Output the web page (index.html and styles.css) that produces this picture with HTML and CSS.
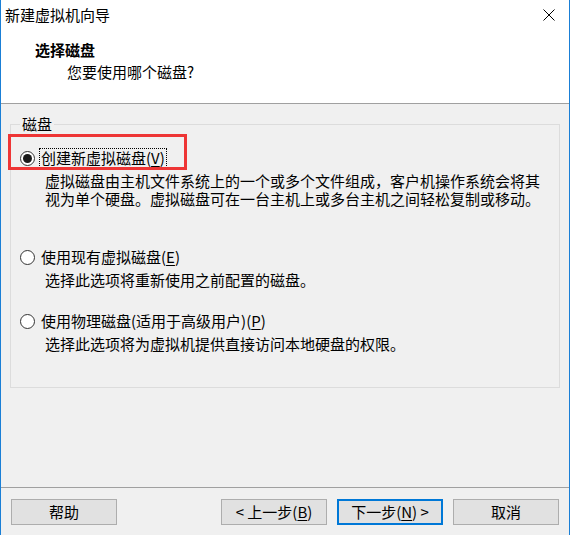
FILE: index.html
```html
<!DOCTYPE html>
<html lang="zh-CN">
<head>
<meta charset="utf-8">
<title>新建虚拟机向导</title>
<link rel="stylesheet" href="styles.css">
</head>
<body>
<div class="window">
  <div class="titlebar">
    <span class="title">新建虚拟机向导</span>
    <span class="close">
      <svg width="12" height="12" viewBox="0 0 12 12"><path d="M0.5 0.5 L11.5 11.5 M11.5 0.5 L0.5 11.5" stroke="#000" stroke-width="1" fill="none"/></svg>
    </span>
  </div>
  <div class="header">
    <div class="heading">选择磁盘</div>
    <div class="subheading">您要使用哪个磁盘?</div>
  </div>
  <div class="main">
    <fieldset class="group">
      <legend>磁盘</legend>
      <div class="option">
        <span class="radio checked"></span>
        <span class="label focus">创建新虚拟磁盘(<u>V</u>)</span>
      </div>
      <div class="desc">虚拟磁盘由主机文件系统上的一个或多个文件组成，客户机操作系统会将其<br>视为单个硬盘。虚拟磁盘可在一台主机上或多台主机之间轻松复制或移动。</div>
      <div class="option opt2">
        <span class="radio"></span>
        <span class="label">使用现有虚拟磁盘(<u>E</u>)</span>
      </div>
      <div class="desc">选择此选项将重新使用之前配置的磁盘。</div>
      <div class="option opt3">
        <span class="radio"></span>
        <span class="label">使用物理磁盘(适用于高级用户)(<u>P</u>)</span>
      </div>
      <div class="desc">选择此选项将为虚拟机提供直接访问本地硬盘的权限。</div>
    </fieldset>
  </div>
  <div class="footer">
    <button class="btn">帮助</button>
    <div class="spacer"></div>
    <button class="btn">&lt; 上一步(<u>B</u>)</button>
    <button class="btn primary">下一步(<u>N</u>) &gt;</button>
    <button class="btn">取消</button>
  </div>
  <div class="highlight"></div>
</div>
</body>
</html>
```

FILE: styles.css
```css
html, body {
  margin: 0;
  padding: 0;
  background: #ffffff;
}

body {
  font-family: "Noto Sans CJK SC", "Microsoft YaHei", sans-serif;
  font-size: 15px;
  color: #000;
}

.window {
  position: relative;
  width: 568px;
  height: 535px;
  border-left: 1px solid #1a7fd6;
  border-right: 1px solid #1a7fd6;
  background: #f0f0f0;
  display: flex;
  flex-direction: column;
}

.titlebar {
  height: 30px;
  background: #fff;
  display: flex;
  align-items: center;
  justify-content: space-between;
  padding-left: 4px;
  padding-right: 14px;
}

.title {
  line-height: 20px;
}

.close {
  display: flex;
  width: 12px;
  height: 12px;
}

.header {
  height: 73px;
  background: #fff;
  border-bottom: 1px solid #a0a0a0;
  box-sizing: content-box;
}

.heading {
  font-weight: bold;
  line-height: 20px;
  padding-top: 10px;
  padding-left: 34px;
}

.subheading {
  line-height: 20px;
  margin-top: 2px;
  padding-left: 66px;
}

.main {
  flex: 1;
  padding: 10px 9px 0 9px;
}

.group {
  margin: 0;
  width: 550px;
  box-sizing: border-box;
  height: 274px;
  border: 1px solid #dcdcdc;
  padding: 14px 10px 0 9px;
}

.group legend {
  line-height: 20px;
  padding: 0 2px;
  margin-left: 0;
}

.option {
  display: flex;
  align-items: center;
  height: 20px;
}

.opt2 {
  margin-top: 39px;
}

.opt3 {
  margin-top: 22px;
}

.radio {
  width: 15px;
  height: 15px;
  box-sizing: border-box;
  border: 1px solid #333;
  border-radius: 50%;
  background: #fff;
  display: flex;
  align-items: center;
  justify-content: center;
  flex: none;
}

.radio.checked::after {
  content: "";
  width: 9px;
  height: 9px;
  border-radius: 50%;
  background: #1a1a1a;
}

.label {
  margin-left: 4px;
  padding: 0 1px;
  line-height: 18px;
  border: 1px dotted transparent;
}

.label.focus {
  border-color: #000;
}

.label u, .btn u {
  text-decoration: underline;
  text-underline-offset: 2px;
}

.desc {
  margin-top: 4px;
  padding-left: 25px;
  line-height: 18px;
}

.footer {
  border-top: 1px solid #a0a0a0;
  box-sizing: border-box;
  display: flex;
  align-items: flex-start;
  gap: 10px;
  padding: 11px 10px 0 10px;
  height: 48px;
}

.spacer {
  flex: 1;
}

.btn {
  width: 106px;
  height: 26px;
  box-sizing: border-box;
  border: 1px solid #adadad;
  background: #e1e1e1;
  font-family: inherit;
  font-size: 15px;
  color: #000;
  padding: 0;
  line-height: 22px;
  margin: 0;
}

.btn.primary {
  border: 2px solid #0078d7;
}

.highlight {
  position: absolute;
  left: 7px;
  top: 134px;
  width: 179px;
  height: 36px;
  box-sizing: border-box;
  border: 3px solid #ee3535;
  pointer-events: none;
}
```
